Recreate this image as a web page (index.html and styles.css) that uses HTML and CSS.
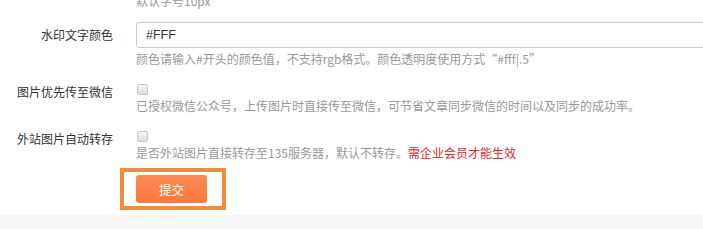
FILE: index.html
```html
<!DOCTYPE html>
<html lang="zh-CN">
<head>
    <meta charset="UTF-8">
    <meta name="viewport" content="width=device-width, initial-scale=1.0">
    <title>水印设置</title>
    <link rel="stylesheet" href="styles.css">
</head>
<body>
    <div class="settings-panel">
        <form class="settings-form">
            <div class="form-group form-group-cut">
                <div class="form-label"></div>
                <div class="form-field">
                    <p class="help-text">默认字号10px</p>
                </div>
            </div>

            <div class="form-group">
                <label class="form-label" for="wmColor">水印文字颜色</label>
                <div class="form-field">
                    <input type="text" id="wmColor" class="text-input" value="#FFF">
                    <p class="help-text">颜色请输入#开头的颜色值，不支持rgb格式。颜色透明度使用方式“#fff|.5”</p>
                </div>
            </div>

            <div class="form-group">
                <label class="form-label check-label" for="toWechat">图片优先传至微信</label>
                <div class="form-field">
                    <div class="check-line">
                        <input type="checkbox" id="toWechat" class="check-input">
                    </div>
                    <p class="help-text">已授权微信公众号，上传图片时直接传至微信，可节省文章同步微信的时间以及同步的成功率。</p>
                </div>
            </div>

            <div class="form-group">
                <label class="form-label check-label" for="autoSave">外站图片自动转存</label>
                <div class="form-field">
                    <div class="check-line">
                        <input type="checkbox" id="autoSave" class="check-input">
                    </div>
                    <p class="help-text">是否外站图片直接转存至135服务器，默认不转存。<span class="help-warn">需企业会员才能生效</span></p>
                </div>
            </div>

            <div class="form-actions">
                <div class="highlight-box">
                    <button type="button" class="btn-submit">提交</button>
                </div>
            </div>
        </form>
    </div>
    <div class="page-footer"></div>
</body>
</html>
```

FILE: styles.css
```css
* {
    margin: 0;
    padding: 0;
    box-sizing: border-box;
}

html, body {
    overflow: hidden;
}

body {
    font-family: "Noto Sans CJK SC", "Noto Sans", "Liberation Sans", sans-serif;
    background: #fff;
    color: #333;
    font-size: 12px;
}

.settings-panel {
    background: white;
    height: 215px;
}

.settings-form {
    display: flex;
    flex-direction: column;
}

.form-group {
    display: flex;
    margin-bottom: 13px;
}

.form-group-cut {
    margin-top: -10px;
    margin-bottom: 12px;
}

.form-label {
    flex: 0 0 113px;
    margin-right: 23px;
    text-align: right;
    line-height: 26px;
    color: #333;
    font-size: 12px;
}

.check-label {
    line-height: 22px;
}

.form-field {
    flex: 1;
    margin-right: -20px;
}

.text-input {
    display: block;
    width: 100%;
    height: 26px;
    padding: 0 9px;
    border: 1px solid #ccc;
    border-radius: 3px;
    font-family: "Liberation Sans", "Noto Sans CJK SC", sans-serif;
    font-size: 12.5px;
    color: #333;
    background: white;
}

.text-input:focus {
    outline: none;
    border-color: #ff8a4c;
}

.help-text {
    line-height: 18px;
    color: #999;
    font-size: 12px;
    margin-top: 2px;
}

.check-line {
    height: 16px;
    display: flex;
    align-items: center;
}

.check-line + .help-text {
    margin-top: 0;
}

.check-input {
    appearance: none;
    -webkit-appearance: none;
    width: 11px;
    height: 11px;
    margin-left: 1px;
    border: 1px solid #c8c8c8;
    border-radius: 2px;
    background: linear-gradient(#f4f4f4, #dedede);
    cursor: pointer;
}

.check-input:checked {
    background: #ff7a3f;
    border-color: #ff7a3f;
}

.help-warn {
    color: #e8262a;
}

.form-actions {
    padding-left: 120px;
    margin-top: -7px;
}

.highlight-box {
    display: inline-block;
    border: 4px solid #f28b3b;
    padding: 3px 15px 3px 12px;
}

.btn-submit {
    display: block;
    width: 71px;
    height: 28px;
    border: none;
    border-radius: 3px;
    background: linear-gradient(#ff8a52, #fd7840);
    color: white;
    font-family: "Noto Sans CJK SC", sans-serif;
    font-size: 12.5px;
    cursor: pointer;
}

.page-footer {
    height: 14px;
    background: #f6f6f6;
}
```
